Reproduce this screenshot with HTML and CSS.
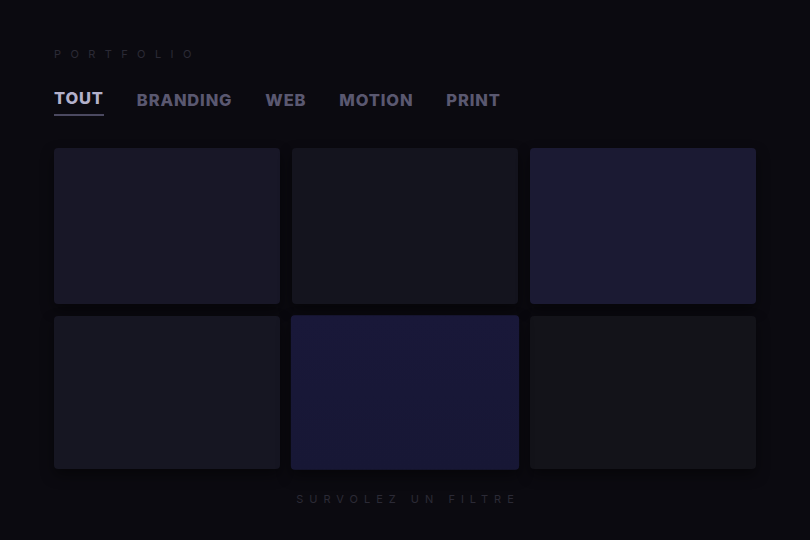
FILE: index.html
```html
<!DOCTYPE html>
<html lang="fr">
<head>
<meta charset="utf-8">
<link rel="stylesheet" href="styles.css">
</head>
<body>
<main class="page">
  <div class="eyebrow">PORTFOLIO</div>
  <nav class="tabs">
    <span class="tab active">TOUT</span>
    <span class="tab">BRANDING</span>
    <span class="tab">WEB</span>
    <span class="tab">MOTION</span>
    <span class="tab">PRINT</span>
  </nav>
  <section class="grid">
    <div class="card c1"></div>
    <div class="card c2"></div>
    <div class="card c3"></div>
    <div class="card c4"></div>
    <div class="card c5"></div>
    <div class="card c6"></div>
  </section>
  <div class="hint">SURVOLEZ UN FILTRE</div>
</main>
</body>
</html>
```
FILE: styles.css
```css
html, body {
  margin: 0;
  padding: 0;
  background: #0b0a10;
}
body {
  font-family: Inter, "Liberation Sans", sans-serif;
  width: 810px;
  height: 540px;
  overflow: hidden;
}
.page {
  padding: 47px 54px 0 54px;
}
.eyebrow {
  font-size: 11px;
  letter-spacing: 9.4px;
  color: #2b2a36;
  line-height: 14px;
  font-weight: 400;
}
.tabs {
  display: flex;
  gap: 33px;
  margin-top: 29px;
}
.tab {
  font-size: 16.5px;
  font-weight: 800;
  letter-spacing: 0.05em;
  color: #5a5870;
  padding-bottom: 6px;
  line-height: 20px;
  border-bottom: 2px solid transparent;
}
.tab.active {
  color: #b3b1cb;
  border-bottom-color: #4b4960;
  transform: translateY(-2px);
}
.grid {
  margin-top: 30px;
  display: grid;
  grid-template-columns: repeat(3, 226px);
  grid-template-rows: 156px 153px;
  gap: 12px;
}
.card {
  border-radius: 4px;
  box-shadow: 0 6px 14px rgba(0,0,0,0.45);
}
.c1 { background: #181727; }
.c2 { background: #14141e; }
.c3 { background: #1b1a33; }
.c4 { background: #161622; }
.c5 { background: linear-gradient(#191839, #171735); transform: scale(1.01); }
.c6 { background: #131319; }
.hint {
  margin-top: 23px;
  text-align: center;
  font-size: 11px;
  letter-spacing: 6px;
  color: #2b2a36;
  padding-left: 6px;
}
```
